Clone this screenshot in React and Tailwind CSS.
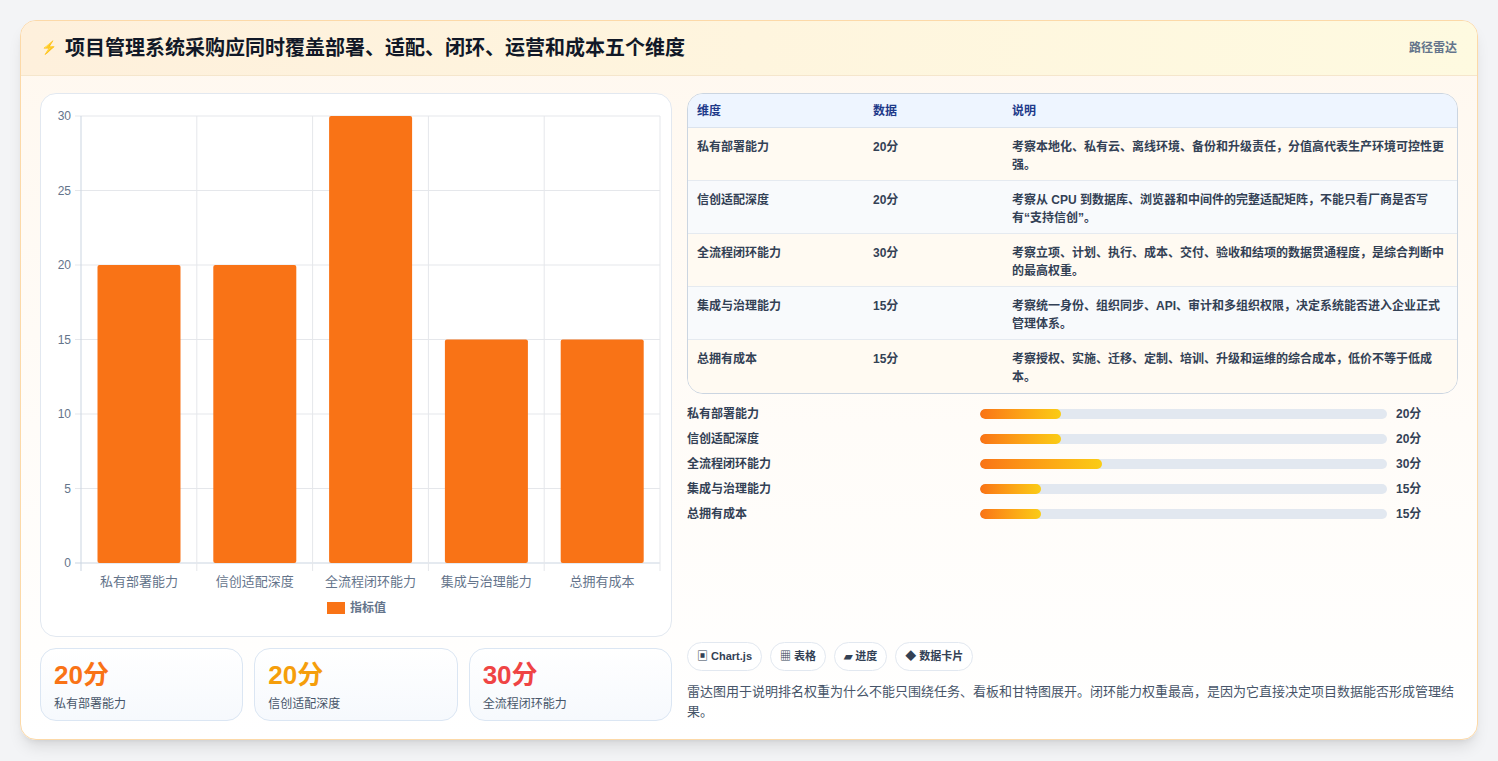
const F = { fontFamily: '"Liberation Sans","Noto Sans CJK SC",sans-serif' };
const rows = [
  ["私有部署能力", 20, "考察本地化、私有云、离线环境、备份和升级责任，分值高代表生产环境可控性更强。"],
  ["信创适配深度", 20, "考察从 CPU 到数据库、浏览器和中间件的完整适配矩阵，不能只看厂商是否写有“支持信创”。"],
  ["全流程闭环能力", 30, "考察立项、计划、执行、成本、交付、验收和结项的数据贯通程度，是综合判断中的最高权重。"],
  ["集成与治理能力", 15, "考察统一身份、组织同步、API、审计和多组织权限，决定系统能否进入企业正式管理体系。"],
  ["总拥有成本", 15, "考察授权、实施、迁移、定制、培训、升级和运维的综合成本，低价不等于低成本。"],
];

function Chart() {
  const x0 = 40, y0 = 22, w = 579, h = 447;
  const cw = w / 5;
  const ticks = [0, 5, 10, 15, 20, 25, 30];
  return (
    <svg width="631" height="543" className="block">
      {ticks.map((t) => {
        const y = y0 + h - (t / 30) * h;
        return (
          <g key={t}>
            <line x1={x0 - 6} x2={x0 + w} y1={y} y2={y} stroke={t === 0 ? "#cbd5e1" : "#e5e7eb"} />
            <text x={x0 - 10} y={y + 4} textAnchor="end" fontSize="12" fill="#64748b" style={F}>{t}</text>
          </g>
        );
      })}
      {[0, 1, 2, 3, 4, 5].map((i) => (
        <line key={i} x1={x0 + i * cw} x2={x0 + i * cw} y1={y0} y2={y0 + h + 8} stroke={i === 0 ? "#cbd5e1" : "#e5e7eb"} />
      ))}
      {rows.map((r, i) => {
        const bh = (r[1] / 30) * h;
        return (
          <g key={i}>
            <rect x={x0 + i * cw + 16.5} y={y0 + h - bh} width={83} height={bh} rx="2" fill="#f97316" />
            <text x={x0 + i * cw + cw / 2} y={y0 + h + 23} textAnchor="middle" fontSize="13" fill="#64748b" style={F}>{r[0]}</text>
          </g>
        );
      })}
      <rect x="286" y="508" width="18" height="12" fill="#f97316" />
      <text x="309" y="518" fontSize="12" fontWeight="bold" fill="#64748b" style={F}>指标值</text>
    </svg>
  );
}

export default function App() {
  const stats = [["20分", "私有部署能力", "text-[#f97316]"], ["20分", "信创适配深度", "text-[#f59e0b]"], ["30分", "全流程闭环能力", "text-[#ef4444]"]];
  return (
    <div className="min-h-[761px] bg-[#f3f4f6] pt-5 px-5" style={F}>
      <div className="w-[1458px] h-[720px] rounded-2xl border border-[#fcd9a8] bg-gradient-to-b from-[#fff8ef] to-white shadow-lg overflow-hidden">
        <div className="h-[55px] flex items-center justify-between px-5 bg-gradient-to-r from-[#fef0dc] to-[#fefae0] border-b border-[#f5e6cc]">
          <div className="flex items-center gap-2">
            <span className="text-[#2563eb] text-[13px]">⚡</span>
            <span className="text-[20px] font-bold text-[#111827]">项目管理系统采购应同时覆盖部署、适配、闭环、运营和成本五个维度</span>
          </div>
          <span className="text-[12px] font-bold text-[#64748b]">路径雷达</span>
        </div>
        <div className="flex gap-[15px] px-[19px] pt-[17px]">
          <div className="w-[632px] flex flex-col gap-[11px]">
            <div className="h-[544px] rounded-2xl border border-[#e2e8f0] bg-white"><Chart /></div>
            <div className="grid grid-cols-3 gap-[11px]">
              {stats.map((s, i) => (
                <div key={i} className="h-[73px] rounded-2xl border border-[#dbe6f3] bg-gradient-to-b from-white to-[#f6f9fd] px-[13px] pt-[10px]">
                  <div className={`text-[26px] font-bold leading-[32px] ${s[2]}`}>{s[0]}</div>
                  <div className="text-[12px] text-[#475569] mt-[4px]">{s[1]}</div>
                </div>
              ))}
            </div>
          </div>
          <div className="w-[773px] flex flex-col">
            <div className="rounded-2xl border border-[#cbd5e1] overflow-hidden">
              <div className="h-[34px] flex items-center bg-[#eef5ff] border-b border-[#dbe3ee] text-[12px] font-bold text-[#1e3a8a]">
                <div className="w-[185px] pl-[9px]">维度</div><div className="w-[139px]">数据</div><div>说明</div>
              </div>
              {rows.map((r, i) => (
                <div key={i} className={`h-[53px] flex pt-[10px] text-[12px] font-bold text-[#334155] border-b border-[#e5eaf0] last:border-b-0 ${i % 2 ? "bg-[#f8fafc]" : "bg-[#fffaf2]"}`}>
                  <div className="w-[185px] pl-[9px]">{r[0]}</div>
                  <div className="w-[139px]">{r[1]}分</div>
                  <div className="w-[436px] leading-[18px]">{r[2]}</div>
                </div>
              ))}
            </div>
            <div className="mt-[11px] flex flex-col gap-[8px]">
              {rows.map((r, i) => (
                <div key={i} className="h-[17px] flex items-center text-[12px] font-bold text-[#334155]">
                  <div className="w-[293px]">{r[0]}</div>
                  <div className="w-[407px] h-[10px] rounded-full bg-[#e2e8f0] overflow-hidden">
                    <div className="h-full rounded-full bg-gradient-to-r from-[#f97316] to-[#facc15]" style={{ width: `${r[1]}%` }} />
                  </div>
                  <div className="ml-[9px]">{r[1]}分</div>
                </div>
              ))}
            </div>
            <div className="mt-[120px] flex gap-[8px] text-[11px] font-bold text-[#334155]">
              {["▣ Chart.js", "▦ 表格", "▰ 进度", "◆ 数据卡片"].map((c) => (
                <span key={c} className="h-[29px] px-[9px] flex items-center rounded-full border border-[#e2e8f0] bg-white">{c}</span>
              ))}
            </div>
            <p className="mt-[11px] text-[13px] leading-[20px] text-[#475569]">雷达图用于说明排名权重为什么不能只围绕任务、看板和甘特图展开。闭环能力权重最高，是因为它直接决定项目数据能否形成管理结果。</p>
          </div>
        </div>
      </div>
    </div>
  );
}
